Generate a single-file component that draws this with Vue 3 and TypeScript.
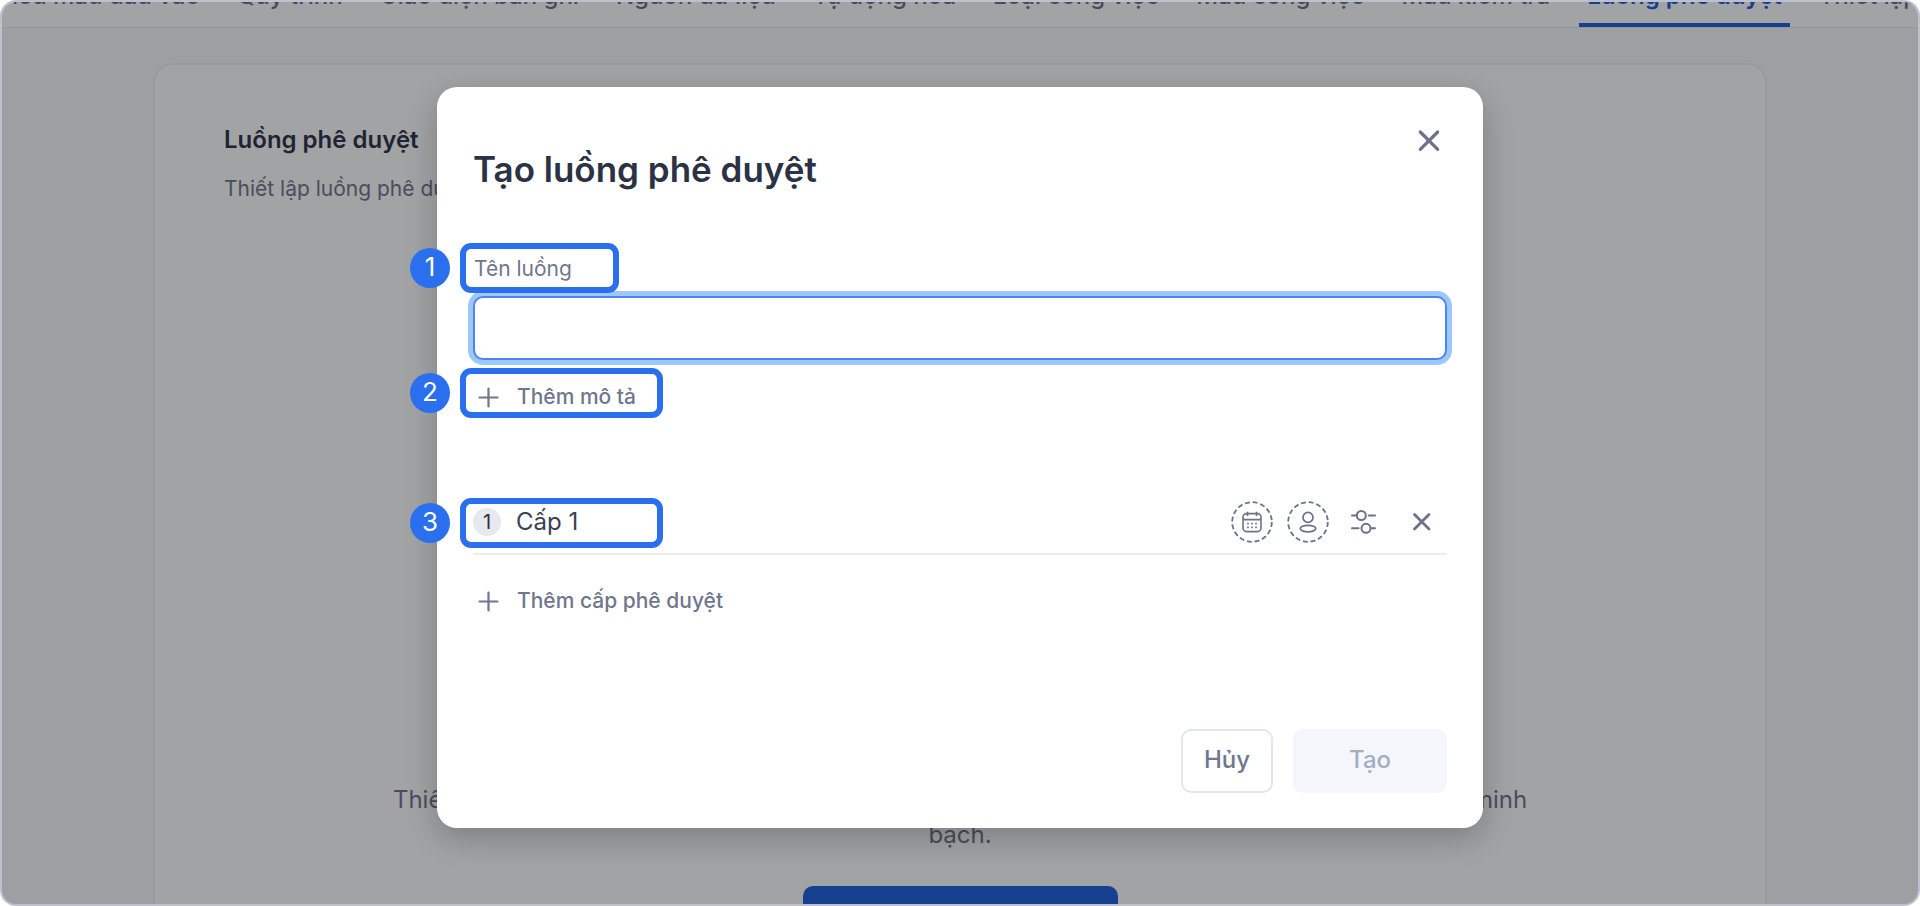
<script setup lang="ts">
import { ref } from 'vue'

interface Tab {
  label: string
  active?: boolean
}

const tabs: Tab[] = [
  { label: 'Biểu mẫu đầu vào' },
  { label: 'Quy trình' },
  { label: 'Giao diện bản ghi' },
  { label: 'Nguồn dữ liệu' },
  { label: 'Tự động hóa' },
  { label: 'Loại công việc' },
  { label: 'Mẫu công việc' },
  { label: 'Mẫu kiểm tra' },
  { label: 'Luồng phê duyệt', active: true },
  { label: 'Thiết lập' },
]

const flowName = ref('')
const levels = ref<string[]>(['Cấp 1'])
</script>

<template>
  <div class="frame">
    <nav class="tabs">
      <a v-for="tab in tabs" :key="tab.label" href="#" class="tab" :class="{ active: tab.active }">{{ tab.label }}</a>
    </nav>

    <main class="page">
      <section class="card">
        <h1 class="card-title">Luồng phê duyệt</h1>
        <p class="card-sub">Thiết lập luồng phê duyệt</p>
        <div class="empty">
          <p class="empty-text">
            Thiết lập luồng phê duyệt để chuẩn hóa quy trình và giúp việc phê duyệt được nhanh chóng và minh bạch.
          </p>
          <button type="button" class="empty-btn">Thêm luồng phê duyệt</button>
        </div>
      </section>
    </main>

    <div class="overlay">
      <form class="modal" role="dialog" aria-labelledby="dialog-title" @submit.prevent>
        <header class="modal-head">
          <h2 id="dialog-title">Tạo luồng phê duyệt</h2>
          <button type="button" class="icon-btn close" aria-label="Đóng">
            <svg width="36" height="36" viewBox="0 0 36 36" fill="none" stroke="currentColor" stroke-width="3.2" stroke-linecap="round">
              <path d="M9.3 9l17.4 17.4M26.7 9L9.3 26.4" />
            </svg>
          </button>
        </header>

        <div class="label-row">
          <label for="flow-name">Tên luồng</label>
          <span class="callout short"><span class="pin">1</span></span>
        </div>
        <input id="flow-name" v-model="flowName" class="name-input" type="text" autocomplete="off" />

        <div class="add-row desc">
          <button type="button" class="add-btn">
            <svg width="30" height="28" viewBox="0 0 30 28" fill="none" stroke="currentColor" stroke-width="2.2" stroke-linecap="round">
              <path d="M6.5 14.5h18M15.5 5.5v18" />
            </svg>
            <span>Thêm mô tả</span>
          </button>
          <span class="callout raised"><span class="pin">2</span></span>
        </div>

        <div v-for="(level, i) in levels" :key="i" class="level">
          <span class="level-no">{{ i + 1 }}</span>
          <input v-model="levels[i]" class="level-name" type="text" :aria-label="level" />
          <div class="level-tools">
            <button type="button" class="icon-btn" aria-label="Thời hạn">
              <svg width="42" height="42" viewBox="0 0 42 42" fill="none" stroke="currentColor">
                <circle cx="21" cy="21" r="19.8" stroke-width="1.8" stroke-dasharray="5 2.78" />
                <rect x="12" y="12.6" width="18" height="18" rx="3.6" stroke-width="1.6" />
                <path d="M12 18.6h18M16.5 10.8v4.2M25.5 10.8v4.2" stroke-width="1.6" />
                <path d="M16.2 22.6h9.8M16.2 26.4h9.8" stroke-width="1.6" stroke-dasharray="1.6 2.4" />
              </svg>
            </button>
            <button type="button" class="icon-btn" aria-label="Người duyệt">
              <svg width="42" height="42" viewBox="0 0 42 42" fill="none" stroke="currentColor">
                <circle cx="21" cy="21" r="19.8" stroke-width="1.8" stroke-dasharray="5 2.78" />
                <circle cx="21" cy="16.4" r="5" stroke-width="1.7" />
                <ellipse cx="21" cy="27.6" rx="7.8" ry="3.2" stroke-width="1.7" />
              </svg>
            </button>
            <button type="button" class="icon-btn" aria-label="Tùy chỉnh">
              <svg width="42" height="42" viewBox="0 0 42 42" fill="none" stroke="currentColor" stroke-width="2" stroke-linecap="round">
                <path d="M9 14.5h4.6M25.8 14.5H32M9 27.3h6.6M28 27.3h4" />
                <circle cx="18.3" cy="14.5" r="4.5" />
                <circle cx="23" cy="27.3" r="4.5" />
              </svg>
            </button>
            <button type="button" class="icon-btn remove" aria-label="Xóa cấp">
              <svg width="42" height="42" viewBox="0 0 42 42" fill="none" stroke="currentColor" stroke-width="2.8" stroke-linecap="round">
                <path d="M13.5 13.5l14.5 14.5M28 13.5L13.5 28" />
              </svg>
            </button>
          </div>
          <span v-if="i === 0" class="callout"><span class="pin">3</span></span>
        </div>

        <div class="add-row">
          <button type="button" class="add-btn">
            <svg width="30" height="28" viewBox="0 0 30 28" fill="none" stroke="currentColor" stroke-width="2.2" stroke-linecap="round">
              <path d="M6.5 14.5h18M15.5 5.5v18" />
            </svg>
            <span>Thêm cấp phê duyệt</span>
          </button>
        </div>

        <footer class="modal-foot">
          <button type="button" class="btn cancel">Hủy</button>
          <button type="submit" class="btn create" disabled>Tạo</button>
        </footer>
      </form>
    </div>
  </div>
</template>

<style>
body {
  margin: 0;
  background: #fff;
}
</style>

<style scoped>
* {
  box-sizing: border-box;
}

.frame {
  position: relative;
  height: 100vh;
  overflow: hidden;
  border: 2px solid #bfc0cd;
  border-radius: 16px;
  background: #f8f9fc;
  font-family: Inter, 'Liberation Sans', sans-serif;
  color: #6f768d;
}

button,
input {
  font-family: inherit;
  margin: 0;
}

button {
  padding: 0;
  border: 0;
  background: none;
  color: inherit;
}

h1,
h2,
p {
  margin: 0;
}

/* Horizontally scrolled tab strip */
.tabs {
  display: flex;
  justify-content: flex-end;
  gap: 21px;
  height: 64px;
  margin: -38px -8px 0 0;
  border-bottom: 1px solid #e6e8ee;
  background: #fff;
}

.tab {
  flex: none;
  padding: 16px 8px 0;
  border-bottom: 4px solid transparent;
  font-size: 24px;
  font-weight: 500;
  line-height: 32px;
  color: #6b7289;
  text-decoration: none;
}

.tab.active {
  border-color: #1f5edc;
  font-weight: 600;
  color: #1f5edc;
}

.page {
  padding: 35px 151px 0;
}

.card {
  display: flex;
  flex-direction: column;
  min-height: 960px;
  padding: 59px 69px;
  border: 2px solid #f0f1f5;
  border-radius: 20px;
  background: #fff;
}

.card-title {
  font-size: 24px;
  font-weight: 600;
  line-height: 32px;
  color: #2b3245;
}

.card-sub {
  margin-top: 19px;
  font-size: 21px;
  line-height: 28px;
}

.empty {
  display: flex;
  flex-direction: column;
  align-items: center;
  margin-top: 579px;
  text-align: center;
}

.empty-text {
  max-width: 1160px;
  font-size: 24px;
  line-height: 35px;
}

.empty-btn {
  min-width: 315px;
  height: 64px;
  margin-top: 34px;
  border-radius: 10px;
  background: #1f5edc;
  font-size: 24px;
  font-weight: 500;
  color: #fff;
}

.overlay {
  position: absolute;
  inset: 0;
  display: flex;
  align-items: center;
  justify-content: center;
  padding-top: 8px;
  background: rgba(10, 13, 18, 0.38);
}

.modal {
  display: flex;
  flex-direction: column;
  width: 1046px;
  padding: 36px 36px 35px;
  border-radius: 20px;
  background: #fff;
  box-shadow: 0 10px 30px rgba(10, 13, 18, 0.24);
}

.modal-head {
  display: flex;
  align-items: flex-start;
  justify-content: space-between;
}

.modal-head h2 {
  margin-top: 22px;
  font-size: 35px;
  font-weight: 600;
  line-height: 48px;
  color: #2b3245;
}

.icon-btn {
  display: block;
  color: #6b7289;
}

.icon-btn svg {
  display: block;
}

.label-row,
.add-row,
.level {
  position: relative;
  display: flex;
  align-items: center;
}

.label-row {
  margin-top: 62px;
}

.label-row label {
  padding-left: 1px;
  font-size: 21px;
  line-height: 28px;
}

.name-input {
  width: 100%;
  height: 64px;
  margin-top: 13px;
  padding: 0 16px;
  border: 2px solid #4b86f0;
  border-radius: 10px;
  outline: none;
  box-shadow: 0 0 0 5px #9dc7ff;
  font-size: 24px;
  color: #2b3245;
}

.desc {
  margin-top: 23px;
}

.add-btn {
  display: flex;
  align-items: center;
  gap: 14px;
  font-size: 21px;
  font-weight: 500;
  line-height: 28px;
}

.level {
  height: 64px;
  margin-top: 80px;
  margin-bottom: 32px;
  border-bottom: 2px solid #ebebf2;
}

.level-no {
  display: flex;
  align-items: center;
  justify-content: center;
  width: 28px;
  height: 28px;
  border-radius: 50%;
  background: #e8e9ee;
  font-size: 20px;
  color: #2b3245;
}

.level-name {
  flex: 1;
  min-width: 0;
  height: 36px;
  margin-left: 15px;
  padding: 0;
  border: 0;
  outline: none;
  background: transparent;
  font-size: 24px;
  color: #3a4153;
}

.level-tools {
  display: flex;
  gap: 14px;
  margin-right: 4px;
}

.remove {
  margin-left: 2px;
}

.modal-foot {
  display: flex;
  justify-content: flex-end;
  gap: 20px;
  margin-top: 114px;
}

.btn {
  height: 64px;
  padding-bottom: 2px;
  border-radius: 10px;
  font-size: 24px;
  font-weight: 500;
}

.cancel {
  width: 92px;
  border: 2px solid #e3e6ee;
}

.create {
  width: 154px;
  background: #f4f6fb;
  color: #a5adc2;
}

/* Numbered annotation laid over a form row */
.callout {
  position: absolute;
  top: 50%;
  left: -13px;
  width: 203px;
  height: 50px;
  margin-top: -24px;
  border: 6px solid #296fee;
  border-radius: 11px;
  pointer-events: none;
}

.callout.short {
  width: 159px;
  margin-top: -26px;
}

.callout.raised {
  margin-top: -29px;
}

.pin {
  position: absolute;
  top: -1px;
  left: -56px;
  width: 40px;
  height: 40px;
  border-radius: 50%;
  background: #296fee;
  font-size: 26px;
  line-height: 38px;
  text-align: center;
  color: #fff;
}
</style>
